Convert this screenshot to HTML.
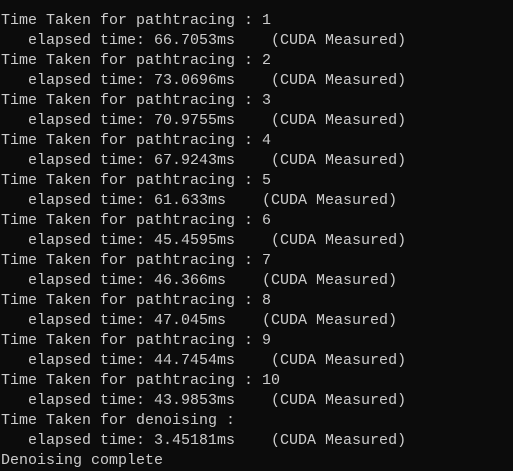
<!DOCTYPE html>
<html><head><meta charset="utf-8"><style>
html,body{margin:0;padding:0;background:#0c0c0c;width:513px;height:471px;overflow:hidden}
pre{margin:0;padding:11px 0 0 1px;font-family:"Liberation Mono",monospace;font-size:15px;line-height:20px;color:#cccccc}
</style></head><body><pre>Time Taken for pathtracing : 1
   elapsed time: 66.7053ms    (CUDA Measured)
Time Taken for pathtracing : 2
   elapsed time: 73.0696ms    (CUDA Measured)
Time Taken for pathtracing : 3
   elapsed time: 70.9755ms    (CUDA Measured)
Time Taken for pathtracing : 4
   elapsed time: 67.9243ms    (CUDA Measured)
Time Taken for pathtracing : 5
   elapsed time: 61.633ms    (CUDA Measured)
Time Taken for pathtracing : 6
   elapsed time: 45.4595ms    (CUDA Measured)
Time Taken for pathtracing : 7
   elapsed time: 46.366ms    (CUDA Measured)
Time Taken for pathtracing : 8
   elapsed time: 47.045ms    (CUDA Measured)
Time Taken for pathtracing : 9
   elapsed time: 44.7454ms    (CUDA Measured)
Time Taken for pathtracing : 10
   elapsed time: 43.9853ms    (CUDA Measured)
Time Taken for denoising :
   elapsed time: 3.45181ms    (CUDA Measured)
Denoising complete</pre></body></html>
